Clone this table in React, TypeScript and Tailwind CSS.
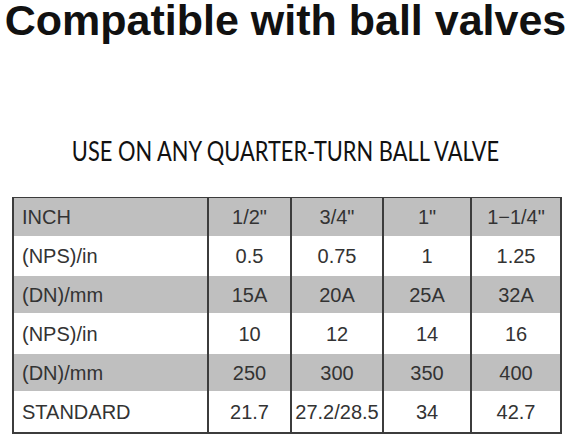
const rows: { label: string; cells: string[]; gray: boolean; h: string }[] = [
  { label: 'INCH', cells: ['1/2"', '3/4"', '1"', '1\u22121/4"'], gray: true, h: 'h-[38px]' },
  { label: '(NPS)/in', cells: ['0.5', '0.75', '1', '1.25'], gray: false, h: 'h-[40px]' },
  { label: '(DN)/mm', cells: ['15A', '20A', '25A', '32A'], gray: true, h: 'h-[37px]' },
  { label: '(NPS)/in', cells: ['10', '12', '14', '16'], gray: false, h: 'h-[41px]' },
  { label: '(DN)/mm', cells: ['250', '300', '350', '400'], gray: true, h: 'h-[37px]' },
  { label: 'STANDARD', cells: ['21.7', '27.2/28.5', '34', '42.7'], gray: false, h: 'h-[41px]' },
]

const colW = ['w-[83px]', 'w-[92px]', 'w-[88px]', 'flex-1']

export default function App() {
  return (
    <div className="w-[571px] h-[437px] bg-white overflow-hidden">
      <h1 className="text-center font-bold text-[43px] leading-[40px] text-[#111] font-['Liberation_Sans',Arial,sans-serif]">
        Compatible with ball valves
      </h1>
      <p className="mt-[98px] text-center text-[26px] leading-none text-[#111] scale-x-[0.84] font-['Lato','Open_Sans',sans-serif]">
        USE ON ANY QUARTER-TURN BALL VALVE
      </p>
      <div className="mt-[33px] ml-[12px] w-[550px] border-2 border-t border-[#3c3c3c] text-[20px] text-[#333] font-['Liberation_Sans',Arial,sans-serif]">
        {rows.map((r, i) => (
          <div key={i} className={`flex ${r.h} ${r.gray ? 'bg-[#bfbfbf]' : 'bg-white'}`}>
            <div className="w-[193px] flex items-center pl-[8px]">{r.label}</div>
            {r.cells.map((c, j) => (
              <div
                key={j}
                className={`${colW[j]} border-l-2 border-[#3c3c3c] flex items-center justify-center`}
              >
                {c}
              </div>
            ))}
          </div>
        ))}
      </div>
    </div>
  )
}
